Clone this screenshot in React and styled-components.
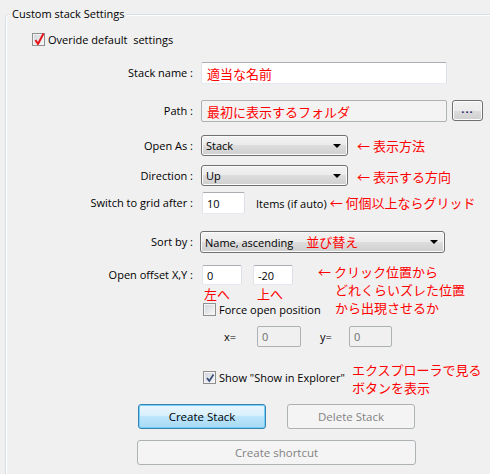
import React from 'react';
import styled, { createGlobalStyle } from 'styled-components';

const UI_FONT = '"Open Sans", "Noto Sans CJK JP", sans-serif';

const GlobalStyle = createGlobalStyle`
  html, body {
    margin: 0;
    padding: 0;
    background: #f0f0f0;
    overflow: hidden;
  }
  body {
    font-family: ${UI_FONT};
    font-size: 11px;
    color: #000;
  }
`;

const Window = styled.div`
  width: 490px;
  height: 474px;
  overflow: hidden;
  padding-top: 14px;
  box-sizing: border-box;
`;

const Group = styled.div`
  margin-left: 5px;
  width: 520px;
  height: 480px;
  border: 1px solid #d5dfe5;
  border-radius: 3px 0 0 0;
  box-shadow: inset 1px 1px 0 #fff;
`;

const Title = styled.div`
  width: fit-content;
  margin: -9px 0 0 4px;
  padding: 0 2px;
  height: 16px;
  line-height: 16px;
  background: #f0f0f0;
`;

const Row = styled.div`
  display: flex;
  align-items: ${p => p.$align || 'center'};
  margin-top: ${p => p.$top}px;
  height: ${p => p.$h}px;
  padding-left: ${p => p.$indent || 0}px;
  gap: ${p => p.$gap || 0}px;
`;

const Label = styled.div`
  flex: none;
  width: 195px;
  padding-right: 8px;
  box-sizing: border-box;
  text-align: right;
  white-space: nowrap;
  line-height: ${p => p.$lh || 16}px;
`;

const TextBox = styled.input`
  flex: none;
  width: ${p => p.$w}px;
  height: ${p => p.$h || 22}px;
  margin: 0 0 0 ${p => p.$ml || 0}px;
  padding: 0 0 0 4px;
  box-sizing: border-box;
  border: 1px solid;
  border-color: #abadb3 #dbdfe6 #e3e9ef #e2e3ea;
  border-radius: 2px;
  background: #fff;
  font-family: ${UI_FONT};
  font-size: 11px;
  color: #000;
  outline: none;

  &.red {
    font-family: "Noto Sans CJK JP", sans-serif;
    font-size: 13px;
    color: #ff0000;
    padding-left: 5px;
  }

  &:read-only.locked {
    background: #f3f3f3;
    border-color: #adb2b5;
  }

  &:disabled {
    background: #f0f0f0;
    border-color: #adb2b5;
    color: #6d6d6d;
  }
`;

const DotsButton = styled.button`
  flex: none;
  width: 31px;
  height: 21px;
  margin-left: 5px;
  padding: 0 0 4px;
  box-sizing: border-box;
  border: 1px solid #707070;
  border-radius: 3px;
  background: linear-gradient(#f2f2f2 0%, #ebebeb 50%, #dddddd 50%, #cfcfcf 100%);
  box-shadow: inset 0 0 0 1px #fcfcfc;
  font-family: ${UI_FONT};
  font-size: 11px;
  font-weight: bold;
  letter-spacing: 1px;
  color: #1f1f6a;
`;

const Select = styled.div`
  flex: none;
  display: flex;
  align-items: center;
  width: ${p => p.$w}px;
  height: ${p => p.$h || 21}px;
  margin-left: ${p => p.$ml || 0}px;
  padding: 0 6px 0 4px;
  box-sizing: border-box;
  border: 1px solid #707070;
  border-radius: 3px;
  background: linear-gradient(#f2f2f2 0%, #ebebeb 50%, #dddddd 50%, #cfcfcf 100%);
  box-shadow: inset 0 0 0 1px #fcfcfc;
  white-space: nowrap;
`;

const Caret = styled.span`
  margin-left: auto;
  width: 0;
  height: 0;
  border-left: 4px solid transparent;
  border-right: 4px solid transparent;
  border-top: 4px solid #000;
`;

const Note = styled.div`
  flex: none;
  margin-left: ${p => p.$ml || 0}px;
  margin-top: ${p => p.$mt || 0}px;
  font-family: "Noto Sans CJK JP", sans-serif;
  font-size: 13px;
  line-height: ${p => p.$lh || 16}px;
  color: #ff0000;
  white-space: nowrap;
`;

const Indent = styled.span`
  display: inline-block;
  width: ${p => p.$w}px;
`;

const Plain = styled.span`
  flex: none;
  margin-left: ${p => p.$ml || 0}px;
  width: ${p => (p.$w ? `${p.$w}px` : 'auto')};
  white-space: nowrap;
`;

const CheckLabel = styled.label`
  display: flex;
  align-items: center;
  gap: 3px;
  height: 16px;
  margin-left: ${p => p.$ml || 0}px;
  margin-top: ${p => p.$mt || 0}px;
  width: ${p => (p.$w ? `${p.$w}px` : 'auto')};
  white-space: nowrap;
  flex: none;
`;

const Box = styled.span`
  position: relative;
  flex: none;
  width: 13px;
  height: 13px;
  box-sizing: border-box;
  border: 1px solid #8e8f8f;
  background: linear-gradient(135deg, #cfd3d8 0%, #eceef0 70%, #f7f7f7 100%);
  box-shadow: inset 0 0 0 1px #f4f4f4;

  svg {
    position: absolute;
    left: -1px;
    top: -2px;
    overflow: visible;
  }
`;

const OffsetFields = styled.div`
  flex: none;
  width: 117px;
  display: flex;
  flex-direction: column;
`;

const Hints = styled.div`
  display: flex;
  height: 14px;
  margin-top: 2px;
  font-family: "Noto Sans CJK JP", sans-serif;
  font-size: 13px;
  line-height: 14px;
  color: #ff0000;

  span:first-child {
    margin-left: 3px;
    width: 53px;
  }
`;

const Button = styled.button`
  flex: none;
  width: ${p => p.$w}px;
  height: 25px;
  padding: 0;
  box-sizing: border-box;
  border-radius: 3px;
  font-family: ${UI_FONT};
  font-size: 11.5px;
  border: 1px solid #adb2b5;
  background: #f4f4f4;
  color: #838383;

  &.default {
    border-color: #3c7fb1;
    background: linear-gradient(#eaf6fd 0%, #d9f0fc 45%, #bee6fd 50%, #a7d9f5 100%);
    box-shadow: inset 0 0 0 1px #6fd3f7;
    color: #000;
  }
`;

const Check = ({ checked, color }) => (
  <Box>
    {checked && (
      <svg width="14" height="14" viewBox="0 0 14 14">
        {color === 'red' ? (
          <path d="M3.5 8 L6 12 L11.5 1.5" fill="none" stroke="#e8141c" strokeWidth="2" strokeLinejoin="round" />
        ) : (
          <path d="M4 8 L6.3 11 L10.5 4.5" fill="none" stroke="#3c4f7f" strokeWidth="1.8" />
        )}
      </svg>
    )}
  </Box>
);

export default function App() {
  return (
    <Window>
      <GlobalStyle />
      <Group>
        <Title>Custom stack Settings</Title>

        <Row $top={9} $h={16}>
          <CheckLabel $ml={26}>
            <Check checked color="red" />
            <span>Overide default&nbsp; settings</span>
          </CheckLabel>
        </Row>

        <Row $top={15} $h={22}>
          <Label>Stack name :</Label>
          <TextBox className="red" $w={246} defaultValue="適当な名前" />
        </Row>

        <Row $top={16} $h={22} $align="flex-start">
          <Label $lh={22}>Path :</Label>
          <TextBox className="red locked" $w={246} readOnly defaultValue="最初に表示するフォルダ" />
          <DotsButton>...</DotsButton>
        </Row>

        <Row $top={13} $h={21}>
          <Label>Open As :</Label>
          <Select $w={147}>
            Stack
            <Caret />
          </Select>
          <Note $ml={9}>← 表示方法</Note>
        </Row>

        <Row $top={9} $h={21}>
          <Label>Direction :</Label>
          <Select $w={147}>
            Up
            <Caret />
          </Select>
          <Note $ml={9} $mt={2}>← 表示する方向</Note>
        </Row>

        <Row $top={6} $h={22}>
          <Label>Switch to grid after :</Label>
          <TextBox $w={43} $ml={1} defaultValue="10" />
          <Plain $ml={11}>Items (if auto)</Plain>
          <Note $ml={3}>← 何個以上ならグリッド</Note>
        </Row>

        <Row $top={17} $h={22}>
          <Label>Sort by :</Label>
          <Select $w={245} $h={22} $ml={-1}>
            Name, ascending
            <Note $ml={13}>並び替え</Note>
            <Caret />
          </Select>
        </Row>

        <Row $top={12} $h={51} $align="flex-start">
          <Label $lh={20}>Open offset X,Y :</Label>
          <OffsetFields>
            <Row $top={0} $h={20}>
              <TextBox $w={40} $h={20} $ml={1} defaultValue="0" />
              <TextBox $w={40} $h={20} $ml={11} defaultValue="-20" />
            </Row>
            <Hints>
              <span>左へ</span>
              <span>上へ</span>
            </Hints>
            <Row $top={1} $h={14}>
              <CheckLabel $ml={2}>
                <Check />
                <span>Force open position</span>
              </CheckLabel>
            </Row>
          </OffsetFields>
          <Note $lh={18} $mt={-2}>
            <div>← クリック位置から</div>
            <div>
              <Indent $w={17} />
              どれくらいズレた位置
            </div>
            <div>
              <Indent $w={17} />
              から出現させるか
            </div>
          </Note>
        </Row>

        <Row $top={10} $h={21} $indent={218}>
          <Plain $w={33}>x=</Plain>
          <TextBox $w={44} $h={21} disabled defaultValue="0" />
          <Plain $ml={19} $w={29}>y=</Plain>
          <TextBox $w={43} $h={21} disabled defaultValue="0" />
        </Row>

        <Row $top={14} $h={36} $align="flex-start" $indent={197}>
          <CheckLabel $mt={8} $w={149}>
            <Check checked />
            <span>Show "Show in Explorer"</span>
          </CheckLabel>
          <Note $lh={18}>
            <div>エクスプローラで見る</div>
            <div>ボタンを表示</div>
          </Note>
        </Row>

        <Row $top={7} $h={25} $indent={132} $gap={21}>
          <Button className="default" $w={128}>Create Stack</Button>
          <Button $w={128} disabled>Delete Stack</Button>
        </Row>

        <Row $top={11} $h={25} $indent={131}>
          <Button $w={279} disabled>Create shortcut</Button>
        </Row>
      </Group>
    </Window>
  );
}
